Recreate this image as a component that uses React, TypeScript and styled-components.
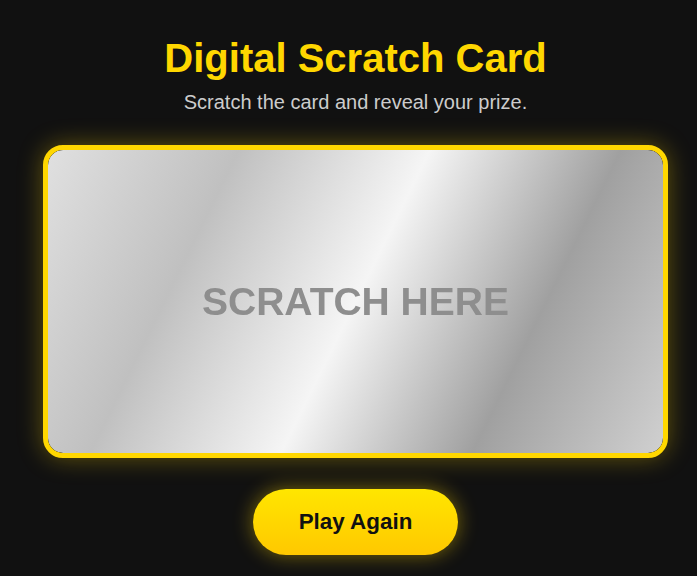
import React from "react";
import styled, { createGlobalStyle } from "styled-components";

const GlobalStyle = createGlobalStyle`
  html, body {
    margin: 0;
    padding: 0;
    background: #111111;
  }
  body {
    font-family: "Liberation Sans", Arial, sans-serif;
  }
`;

const Page = styled.main`
  min-height: 576px;
  box-sizing: border-box;
  padding: 35px 0 0 14px;
  display: flex;
  flex-direction: column;
  align-items: center;
`;

const Title = styled.h1`
  margin: 0 0 10px;
  font-size: 40px;
  font-weight: 700;
  line-height: 46px;
  color: #ffd700;
`;

const Subtitle = styled.p`
  margin: 0 0 31px;
  font-size: 20px;
  line-height: 23px;
  color: #cccccc;
`;

const Card = styled.div`
  width: 615px;
  height: 303px;
  border: 5px solid #ffd700;
  border-radius: 20px;
  background: #111111;
  box-shadow: 0 0 25px rgba(255, 215, 0, 0.35);
  overflow: hidden;
`;

const Surface = styled.div`
  width: 100%;
  height: 100%;
  border-radius: 15px;
  background: linear-gradient(
    116.2deg,
    #e0e0e0 0%,
    #c0c0c0 25%,
    #f5f5f5 50%,
    #a0a0a0 75%,
    #d0d0d0 100%
  );
  display: flex;
  align-items: center;
  justify-content: center;
`;

const ScratchText = styled.span`
  font-size: 39px;
  font-weight: 700;
  color: #8e8e8e;
  filter: blur(0.5px);
  user-select: none;
`;

const PlayButton = styled.button`
  margin-top: 31px;
  height: 66px;
  padding: 0 46px;
  border: none;
  border-radius: 40px;
  background: linear-gradient(180deg, #ffe600 0%, #ffc800 100%);
  box-shadow: 0 0 20px rgba(255, 215, 0, 0.45);
  font-family: "Liberation Sans", Arial, sans-serif;
  font-size: 22.4px;
  font-weight: 700;
  color: #111111;
  cursor: pointer;
`;

export default function App() {
  return (
    <>
      <GlobalStyle />
      <Page>
        <Title>Digital Scratch Card</Title>
        <Subtitle>Scratch the card and reveal your prize.</Subtitle>
        <Card>
          <Surface>
            <ScratchText>SCRATCH HERE</ScratchText>
          </Surface>
        </Card>
        <PlayButton>Play Again</PlayButton>
      </Page>
    </>
  );
}
